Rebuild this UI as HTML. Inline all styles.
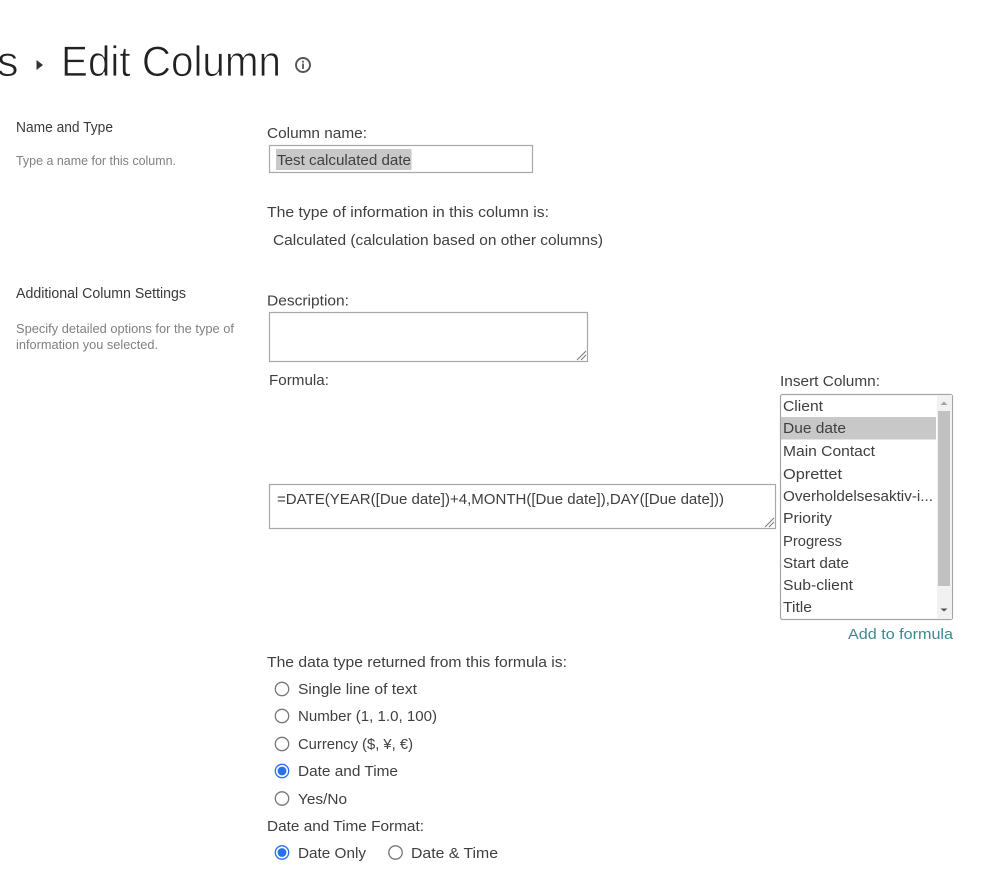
<!DOCTYPE html>
<html lang="en">
<head>
<meta charset="utf-8">
<title>Edit Column</title>
<style>
html,body{margin:0;padding:0;background:#fff;width:999px;height:885px;overflow:hidden}
svg{display:block;position:absolute;left:0;top:0;filter:blur(.3px)}
text{font-family:"Liberation Sans",sans-serif;font-size:14.5px;fill:#444;white-space:pre}
.s{font-size:12.5px;fill:#808080}
.h{font-size:14.5px;fill:#3a3a3a}
.t{font-size:43px;fill:#222;stroke:#fff;stroke-width:.85px}
.l{fill:#3f3f3f}
</style>
</head>
<body>
<svg width="999" height="885" viewBox="0 0 999 885" xmlns="http://www.w3.org/2000/svg">
<rect width="999" height="885" fill="#fff"/>

<text class="t" x="-3" y="76">s</text>
<path d="M36.500 60v10l6.500-5z" fill="#333"/>
<text class="t" x="61" y="76" textLength="220" lengthAdjust="spacingAndGlyphs">Edit Column</text>
<circle cx="303" cy="65" r="7" fill="none" stroke="#555" stroke-width="1.900"/>
<rect x="302.100" y="63.500" width="1.800" height="5.500" fill="#555"/>
<rect x="302.100" y="60.700" width="1.800" height="1.800" fill="#555"/>

<text class="h" x="16" y="132" textLength="97" lengthAdjust="spacingAndGlyphs">Name and Type</text>
<text class="s" x="16" y="165" textLength="160" lengthAdjust="spacingAndGlyphs">Type a name for this column.</text>

<text class="l" x="267" y="138" textLength="100" lengthAdjust="spacingAndGlyphs">Column name:</text>
<rect x="269.500" y="145.500" width="263" height="27" fill="#fff" stroke="#a8a8a8" stroke-width="1.200"/>
<rect x="276" y="149" width="135.500" height="21" fill="#c8c8c8"/>
<text class="l" x="277" y="165" textLength="134" lengthAdjust="spacingAndGlyphs">Test calculated date</text>

<text class="l" x="267" y="217" textLength="282" lengthAdjust="spacingAndGlyphs">The type of information in this column is:</text>
<text class="l" x="273" y="245" textLength="330" lengthAdjust="spacingAndGlyphs">Calculated (calculation based on other columns)</text>

<text class="h" x="16" y="298" textLength="170" lengthAdjust="spacingAndGlyphs">Additional Column Settings</text>
<text class="s" x="16" y="333" textLength="218" lengthAdjust="spacingAndGlyphs">Specify detailed options for the type of</text>
<text class="s" x="16" y="349" textLength="142" lengthAdjust="spacingAndGlyphs">information you selected.</text>

<text class="l" x="267" y="305.500" textLength="82" lengthAdjust="spacingAndGlyphs">Description:</text>
<rect x="269.500" y="312.500" width="318" height="49" fill="#fff" stroke="#a8a8a8" stroke-width="1.200"/>
<path d="M577 360l9-9M581 360l5-5" stroke="#777" stroke-width="1" fill="none"/>

<text class="l" x="269" y="385" textLength="60" lengthAdjust="spacingAndGlyphs">Formula:</text>
<rect x="269.500" y="484.500" width="506" height="44" fill="#fff" stroke="#a8a8a8" stroke-width="1.200"/>
<path d="M765 527l9-9M769 527l5-5" stroke="#777" stroke-width="1" fill="none"/>
<text class="l" x="277" y="504" textLength="447" lengthAdjust="spacingAndGlyphs">=DATE(YEAR([Due date])+4,MONTH([Due date]),DAY([Due date]))</text>

<text class="l" x="780" y="386" textLength="100" lengthAdjust="spacingAndGlyphs">Insert Column:</text>
<rect x="780.500" y="394.500" width="172" height="225" rx="2" fill="#fff" stroke="#a5a5a5" stroke-width="1.200"/>
<rect x="937" y="395" width="15" height="224" fill="#f1f1f1"/>
<rect x="938" y="411" width="12" height="175" fill="#c1c1c1"/>
<path d="M940.500 405l3.500-3.500 3.500 3.500z" fill="#a3a3a3"/>
<path d="M940.500 608.500l3.500 3 3.500-3z" fill="#505050"/>
<rect x="781" y="417" width="155" height="22.500" fill="#c8c8c8"/>
<text class="l" x="783" y="411" textLength="40" lengthAdjust="spacingAndGlyphs">Client</text>
<text class="l" x="783" y="433" textLength="63" lengthAdjust="spacingAndGlyphs">Due date</text>
<text class="l" x="783" y="456" textLength="92" lengthAdjust="spacingAndGlyphs">Main Contact</text>
<text class="l" x="783" y="479" textLength="59" lengthAdjust="spacingAndGlyphs">Oprettet</text>
<text class="l" x="783" y="501" textLength="150" lengthAdjust="spacingAndGlyphs">Overholdelsesaktiv-i...</text>
<text class="l" x="783" y="523" textLength="49" lengthAdjust="spacingAndGlyphs">Priority</text>
<text class="l" x="783" y="546" textLength="59" lengthAdjust="spacingAndGlyphs">Progress</text>
<text class="l" x="783" y="568" textLength="66" lengthAdjust="spacingAndGlyphs">Start date</text>
<text class="l" x="783" y="590" textLength="70" lengthAdjust="spacingAndGlyphs">Sub-client</text>
<text class="l" x="783" y="612" textLength="29" lengthAdjust="spacingAndGlyphs">Title</text>
<text x="848" y="639" textLength="105" lengthAdjust="spacingAndGlyphs" style="fill:#3b8a93">Add to formula</text>

<text class="l" x="267" y="667" textLength="300" lengthAdjust="spacingAndGlyphs">The data type returned from this formula is:</text>

<circle cx="282" cy="689" r="6.700" fill="#fff" stroke="#777" stroke-width="1.300"/>
<text class="l" x="298" y="694" textLength="119" lengthAdjust="spacingAndGlyphs">Single line of text</text>
<circle cx="282" cy="716" r="6.700" fill="#fff" stroke="#777" stroke-width="1.300"/>
<text class="l" x="298" y="721" textLength="139" lengthAdjust="spacingAndGlyphs">Number (1, 1.0, 100)</text>
<circle cx="282" cy="744" r="6.700" fill="#fff" stroke="#777" stroke-width="1.300"/>
<text class="l" x="298" y="749" textLength="115" lengthAdjust="spacingAndGlyphs">Currency ($, ¥, €)</text>
<circle cx="282" cy="771" r="6.700" fill="#fff" stroke="#2b6ff0" stroke-width="1.300"/>
<circle cx="282" cy="771" r="4.400" fill="#2b6ff0"/>
<text class="l" x="298" y="776" textLength="100" lengthAdjust="spacingAndGlyphs">Date and Time</text>
<circle cx="282" cy="798.500" r="6.700" fill="#fff" stroke="#777" stroke-width="1.300"/>
<text class="l" x="298" y="804" textLength="49" lengthAdjust="spacingAndGlyphs">Yes/No</text>

<text class="l" x="267" y="831" textLength="157" lengthAdjust="spacingAndGlyphs">Date and Time Format:</text>
<circle cx="282" cy="852.500" r="6.700" fill="#fff" stroke="#2b6ff0" stroke-width="1.300"/>
<circle cx="282" cy="852.500" r="4.400" fill="#2b6ff0"/>
<text class="l" x="298" y="858" textLength="68" lengthAdjust="spacingAndGlyphs">Date Only</text>
<circle cx="395.500" cy="852.500" r="6.700" fill="#fff" stroke="#777" stroke-width="1.300"/>
<text class="l" x="411" y="858" textLength="87" lengthAdjust="spacingAndGlyphs">Date &amp; Time</text>
</svg>
</body>
</html>
